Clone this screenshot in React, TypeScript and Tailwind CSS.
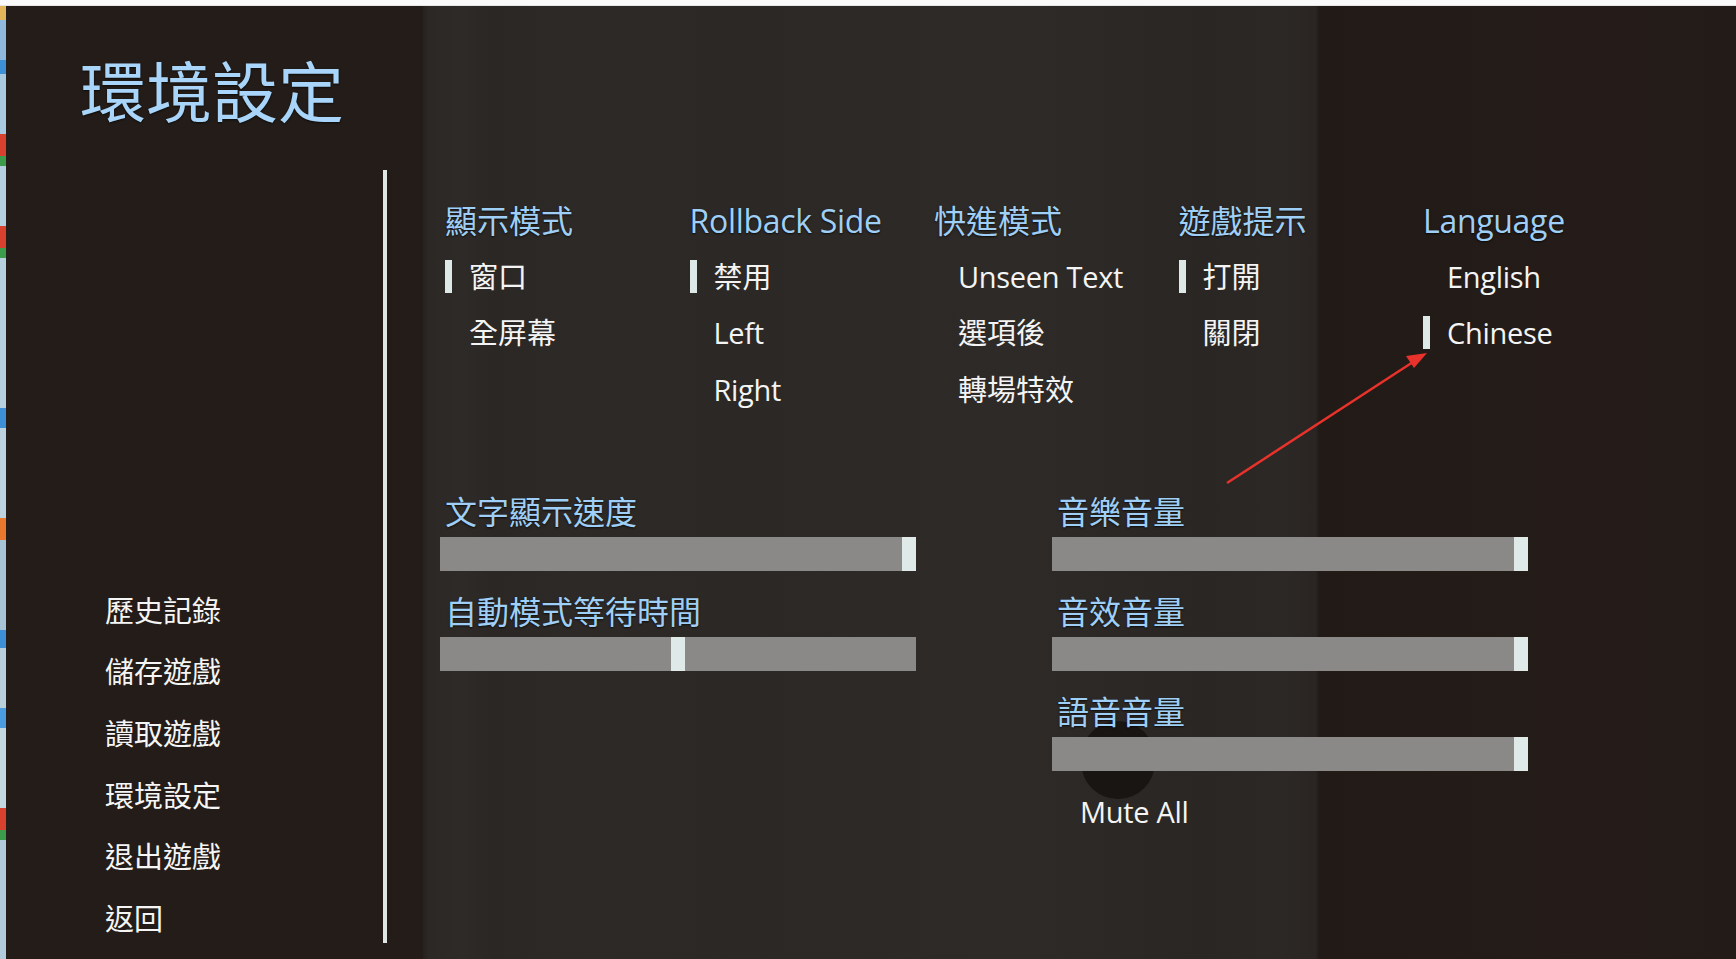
import React from "react";

type Option = { label: string; selected?: boolean };
type Group = { title: string; options: Option[] };

const groups: Group[] = [
  { title: "顯示模式", options: [{ label: "窗口", selected: true }, { label: "全屏幕" }] },
  {
    title: "Rollback Side",
    options: [{ label: "禁用", selected: true }, { label: "Left" }, { label: "Right" }],
  },
  {
    title: "快進模式",
    options: [{ label: "Unseen Text" }, { label: "選項後" }, { label: "轉場特效" }],
  },
  { title: "遊戲提示", options: [{ label: "打開", selected: true }, { label: "關閉" }] },
  { title: "Language", options: [{ label: "English" }, { label: "Chinese", selected: true }] },
];

const menu = ["歷史記錄", "儲存遊戲", "讀取遊戲", "環境設定", "退出遊戲", "返回"];

const blue = "text-[#9fcff6] [text-shadow:0_1px_2px_rgba(0,0,0,0.7)]";

// latin strings run a hair narrower in the game font
const isLatin = (s: string) => /^[\x00-\x7f]+$/.test(s);

function Slider({ label, value }: { label: string; value: number }) {
  // value is 0..1, thumb is 14px wide
  return (
    <div className="flex flex-col">
      <div className={`h-[50px] flex items-center pl-[5px] text-[32px] leading-none ${blue}`}>
        {label}
      </div>
      <div className="relative h-[34px] w-[476px] bg-[#8a8988]">
        <div
          className="absolute top-0 h-full w-[14px] bg-[#dfeae8]"
          style={{ left: `${value * (476 - 14)}px` }}
        />
      </div>
    </div>
  );
}

function DesktopStrip() {
  const bits = [
    "h-[14px] bg-[#e2b55a]", "h-[40px] bg-[#8fb9dc]", "h-[14px] bg-[#3d8fd6]", "h-[60px] bg-[#a9c9e0]",
    "h-[22px] bg-[#d9412f]", "h-[10px] bg-[#3c9c4b]", "h-[60px] bg-[#b3cfe0]", "h-[22px] bg-[#d9412f]",
    "h-[10px] bg-[#3c9c4b]", "h-[150px] bg-[#b7d0de]", "h-[20px] bg-[#3d8fd6]", "h-[90px] bg-[#bcd3df]",
    "h-[22px] bg-[#e9782e]", "h-[90px] bg-[#a7c4d6]", "h-[18px] bg-[#3d8fd6]", "h-[60px] bg-[#b9cfdb]",
    "h-[20px] bg-[#4b9be0]", "h-[80px] bg-[#c4d6e0]", "h-[22px] bg-[#d9412f]", "h-[10px] bg-[#3c9c4b]",
  ];
  return (
    <div className="w-[6px] flex flex-col bg-[#b1cbdc]">
      {bits.map((b, i) => (
        <div key={i} className={`shrink-0 ${b}`} />
      ))}
    </div>
  );
}

export default function App() {
  return (
    <div
      className="w-[1736px] h-[959px] flex flex-col overflow-hidden bg-white"
      style={{ fontFamily: '"Open Sans", "Noto Sans CJK TC", sans-serif' }}
    >
      <div className="h-[6px] bg-[#fafafa] border-b border-[#e6e6e6]" />

      <div className="flex flex-1 min-h-0">
        <DesktopStrip />

        {/* LEFT PANEL */}
        <aside className="w-[417px] flex bg-[#231c18]">
          <div className="w-[377px] flex flex-col">
            <h1 className="pt-[52px] pl-[74px] text-[66px] leading-none text-[#a8d5f9] [text-shadow:0_1px_2px_rgba(0,0,0,0.6)]">
              環境設定
            </h1>
            <nav className="mt-auto pb-[10px] pl-[99px] flex flex-col">
              {menu.map((m) => (
                <div key={m} className="h-[61.6px] flex items-center text-[29px] leading-none text-[#f5f5f5]">
                  {m}
                </div>
              ))}
            </nav>
          </div>
          <div className="w-[4px] mt-[164px] h-[773px] bg-[#dfe6e4]" />
        </aside>

        {/* MAIN */}
        <main className="relative flex-1 flex flex-col bg-[linear-gradient(to_right,#262220_0px,#2b2825_6px,#2e2a27_40px,#2a2724_70px,#2d2926_140px,#2c2825_320px,#2d2a27_600px,#2a2623_780px,#2c2826_860px,#2a2522_893px,#211a16_896px,#221b17_1000px,#251c19_1180px,#221b17_1313px)]">
          {/* OPTION GROUPS */}
          <div className="mt-[188px] pl-[22px] grid grid-cols-[repeat(5,244.5px)]">
            {groups.map((g) => (
              <div key={g.title} className="flex flex-col">
                <div
                  className={`h-[54px] flex items-center text-[32px] leading-none ${blue} ${
                    isLatin(g.title) ? "tracking-[-0.3px]" : ""
                  }`}
                >
                  {g.title}
                </div>
                {g.options.map((o) => (
                  <div key={o.label} className="h-[56.5px] flex items-center">
                    <div className={`w-[7px] h-[33px] ${o.selected ? "bg-[#dde9e7]" : ""}`} />
                    <span
                      className={`ml-[17px] text-[29px] leading-none text-[#f4f4f4] ${
                        isLatin(o.label) ? "tracking-[-0.3px]" : ""
                      }`}
                    >
                      {o.label}
                    </span>
                  </div>
                ))}
              </div>
            ))}
          </div>

          {/* SLIDERS */}
          <div className="mt-[69px] pl-[17px] flex gap-[136px]">
            <div className="flex flex-col gap-[16px]">
              <Slider label="文字顯示速度" value={1} />
              <Slider label="自動模式等待時間" value={0.5} />
            </div>
            <div className="relative flex flex-col gap-[16px]">
              {/* dark round knob of the backdrop, partly under the last bar */}
              <div className="absolute left-[29px] top-[234px] w-[74px] h-[78px] rounded-full bg-[#181513] flex items-center justify-center">
                <div className="w-[12px] h-[14px] rounded-full border-2 border-[#2a2624]" />
              </div>
              <div className="relative">
                <Slider label="音樂音量" value={1} />
              </div>
              <div className="relative">
                <Slider label="音效音量" value={1} />
              </div>
              <div className="relative">
                <Slider label="語音音量" value={1} />
              </div>
              <div className="relative mt-[8px] h-[34px] pl-[28px] flex items-center text-[29px] leading-none tracking-[-0.3px] text-[#f4f4f4]">
                Mute All
              </div>
            </div>
          </div>

          {/* RED ARROW (annotation) */}
          <svg
            className="absolute left-0 top-0 pointer-events-none"
            width="1313"
            height="953"
            viewBox="0 0 1313 953"
          >
            <line x1="804" y1="477" x2="990" y2="356" stroke="#e8322b" strokeWidth="2.5" />
            <polygon points="1004,347 983,350 991,362" fill="#e8322b" />
          </svg>
        </main>
      </div>
    </div>
  );
}
